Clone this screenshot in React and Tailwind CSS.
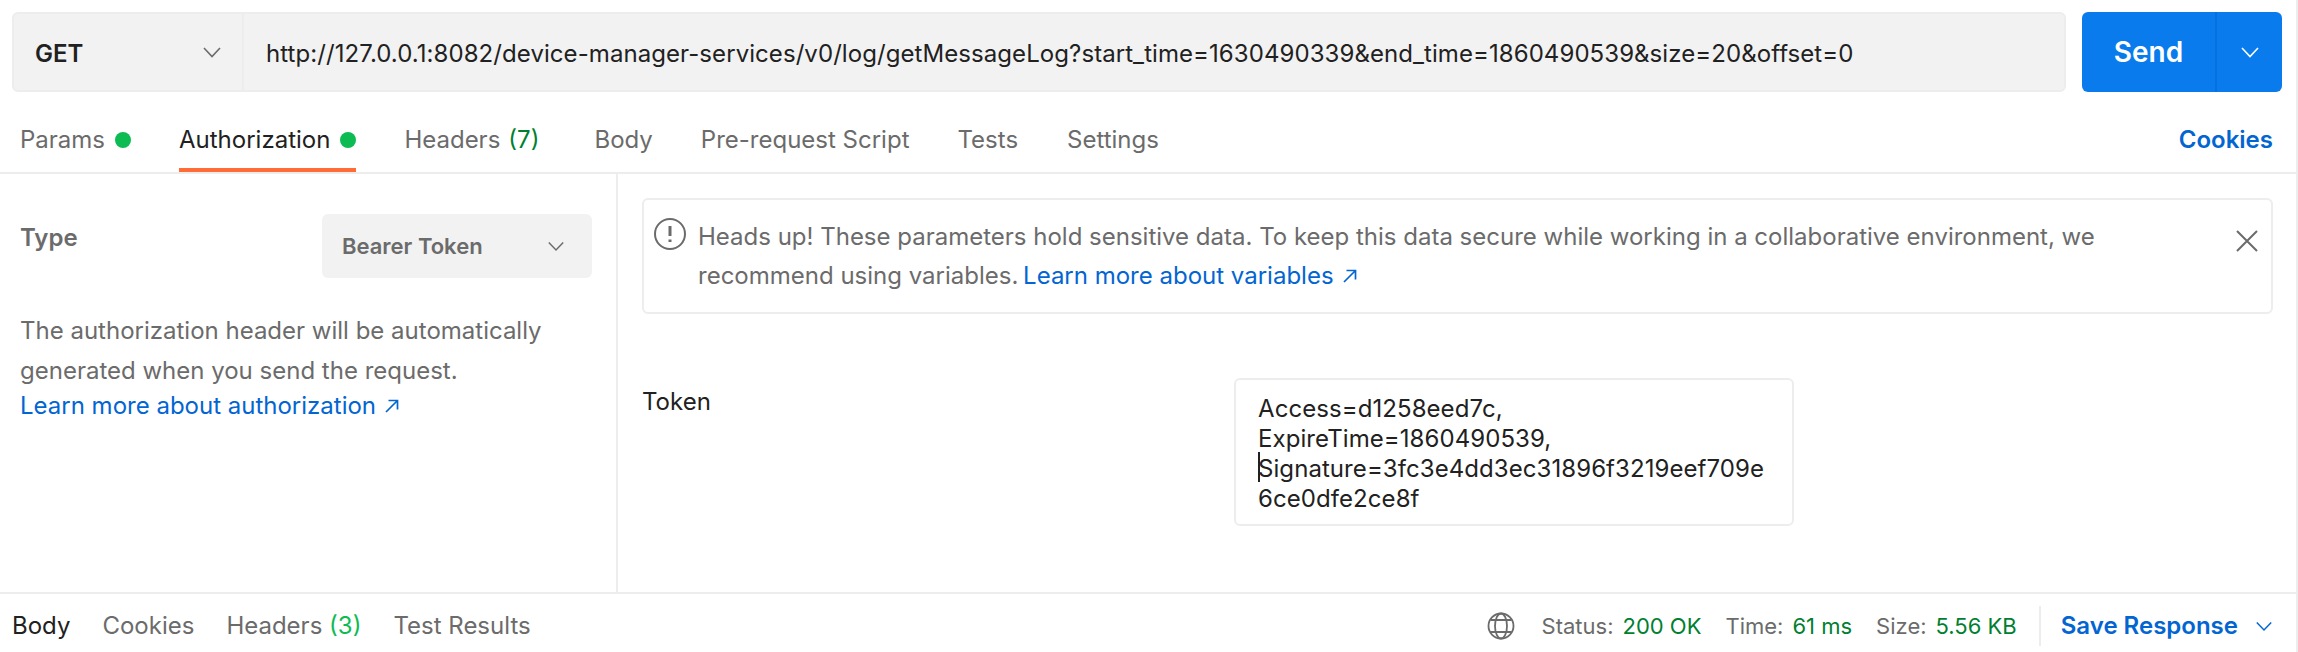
import React from 'react'

function Chevron({ className }) {
  return (
    <svg viewBox="0 0 20 20" fill="none" stroke="currentColor" strokeWidth="1.6" className={className}>
      <path d="M2 6l8 8.5L18 6" />
    </svg>
  )
}

function ArrowNE({ className }) {
  return (
    <svg viewBox="0 0 16 16" fill="none" stroke="currentColor" strokeWidth="1.7" className={className}>
      <path d="M2 14L13 3M4.5 2.5h9v9" />
    </svg>
  )
}

function Dot() {
  return <span className="h-4 w-4 rounded-full bg-[#0cbb52]" />
}

function Tab({ active, children, dot, extra, className = '' }) {
  return (
    <div className={`relative flex h-full items-center gap-[10px] ${active ? 'text-[#212121]' : 'text-[#6b6b6b]'} ${className}`}>
      <span>
        {children}
        {extra && <span className="ml-[8px] text-[#007f31]">{extra}</span>}
      </span>
      {dot && <Dot />}
      {active && <span className="absolute inset-x-0 bottom-0 h-1 bg-[#ff6c37]" />}
    </div>
  )
}

function Stat({ label, value, className = '' }) {
  return (
    <span className={`flex gap-[9px] ${className}`}>
      <span className="text-[#6b6b6b]">{label}</span>
      <span className="text-[#007f31]">{value}</span>
    </span>
  )
}

export default function App() {
  return (
    <div className="flex h-[652px] w-[2298px] flex-col border-r-2 border-[#ededed] bg-white font-['Inter',sans-serif] text-[24px] leading-[30px] text-[#212121]">
      {/* url bar */}
      <div className="flex h-[92px] shrink-0 gap-4 pl-3 pr-[14px] pt-3">
        <div className="flex h-20 flex-1 rounded-md border-2 border-[#ededed] bg-[#f2f2f2]">
          <div className="flex w-[230px] items-center justify-between border-r-2 border-[#ededed] pl-[21px] pr-5">
            <span className="pt-[3px] font-semibold">GET</span>
            <Chevron className="h-5 w-5 text-[#6b6b6b]" />
          </div>
          <div className="flex items-center pl-[22px] pt-[3px] tracking-[0.07px] whitespace-nowrap">
            http://127.0.0.1:8082/device-manager-services/v0/log/getMessageLog?start_time=1630490339&amp;end_time=1860490539&amp;size=20&amp;offset=0
          </div>
        </div>
        <div className="flex h-20 w-[200px] rounded-md bg-[#097bed] text-white">
          <div className="flex w-[135px] items-center justify-center border-r-2 border-[#0670dd] text-[28px] font-semibold">Send</div>
          <div className="flex flex-1 items-center justify-center">
            <Chevron className="h-5 w-5" />
          </div>
        </div>
      </div>

      {/* request tabs */}
      <div className="flex h-[82px] shrink-0 items-center gap-12 border-b-2 border-[#ededed] pl-5 pr-[23px] pt-4">
        <Tab dot>Params</Tab>
        <Tab active dot>Authorization</Tab>
        <Tab extra="(7)" className="mr-[7px]">Headers</Tab>
        <Tab>Body</Tab>
        <Tab>Pre-request Script</Tab>
        <Tab>Tests</Tab>
        <Tab className="ml-[1px]">Settings</Tab>
        <span className="ml-auto font-semibold text-[#0265d2]">Cookies</span>
      </div>

      {/* auth panel */}
      <div className="flex min-h-0 flex-1">
        <div className="w-[618px] shrink-0 border-r-2 border-[#ededed] pl-5 pr-6 pt-10">
          <div className="flex items-start justify-between">
            <span className="mt-[9px] font-semibold text-[#6b6b6b]">Type</span>
            <div className="flex h-16 w-[270px] items-center justify-between rounded-md bg-[#f2f2f2] pl-5 pr-[27px] text-[22px] font-semibold text-[#6b6b6b]">
              Bearer Token
              <Chevron className="h-[18px] w-[18px]" />
            </div>
          </div>
          <p className="mt-[33px] leading-[40px] text-[#6b6b6b]">
            The authorization header will be automatically<br />
            generated when you send the request.
          </p>
          <a className="flex items-center gap-2 text-[#0265d2]">
            Learn more about authorization
            <ArrowNE className="h-4 w-4" />
          </a>
        </div>
        <div className="flex-1 pl-6 pr-[23px] pt-6">
          <div className="flex h-[116px] rounded-md border-2 border-[#ededed] pl-[10px] pr-[13px] pt-[17px]">
            <svg viewBox="0 0 32 32" fill="none" stroke="#6b6b6b" strokeWidth="2" className="mt-[1px] h-8 w-8 shrink-0">
              <circle cx="16" cy="16" r="15" />
              <path d="M16 8v10M16 21.5v2.5" strokeWidth="3" />
            </svg>
            <div className="ml-[12px] flex-1 leading-[39px] text-[#6b6b6b]">
              Heads up! These parameters hold sensitive data. To keep this data secure while working in a collaborative environment, we<br />
              recommend using variables.{' '}
              <a className="-ml-[2px] inline-flex items-center gap-2 text-[#0265d2]">
                Learn more about variables
                <ArrowNE className="h-4 w-4" />
              </a>
            </div>
            <svg viewBox="0 0 22 22" fill="none" stroke="#6b6b6b" strokeWidth="2" className="mt-[13px] h-[22px] w-[22px] shrink-0">
              <path d="M1 1l20 20M21 1L1 21" />
            </svg>
          </div>
          <div className="mt-[64px] flex">
            <span className="mt-[9px] w-[592px] shrink-0">Token</span>
            <div className="relative h-[148px] w-[560px] rounded-md border-2 border-[#ededed] pl-[22px] pt-[14px] leading-[30px] tracking-[0.07px]">
              <div>Access=d1258eed7c,</div>
              <div>ExpireTime=1860490539,</div>
              <div>Signature=3fc3e4dd3ec31896f3219eef709e</div>
              <div>6ce0dfe2ce8f</div>
              <span className="absolute left-[22px] top-[72px] h-[30px] w-[2px] bg-[#212121]" />
            </div>
          </div>
        </div>
      </div>

      {/* response bar */}
      <div className="flex h-[60px] shrink-0 items-center border-t-2 border-[#ededed] pl-3 pr-[23px] pt-[5px]">
        <div className="flex items-center gap-8">
          <span>Body</span>
          <span className="text-[#6b6b6b]">Cookies</span>
          <span className="text-[#6b6b6b]">
            Headers <span className="text-[#0cbb52]">(3)</span>
          </span>
          <span className="text-[#6b6b6b]">Test Results</span>
        </div>
        <div className="ml-auto flex items-center text-[22px]">
          <svg viewBox="0 0 28 28" fill="none" stroke="#6b6b6b" strokeWidth="1.8" className="mr-[27px] h-7 w-7">
            <circle cx="14" cy="14" r="12.5" />
            <ellipse cx="14" cy="14" rx="6" ry="12.5" />
            <path d="M3.5 8h21M3.5 20h21" />
          </svg>
          <Stat label="Status:" value="200 OK" className="mr-6" />
          <Stat label="Time:" value="61 ms" className="mr-6" />
          <Stat label="Size:" value="5.56 KB" />
          <span className="ml-[22px] mr-5 h-10 w-[2px] bg-[#ededed]" />
          <span className="text-[24px] font-semibold text-[#0265d2]">Save Response</span>
          <Chevron className="ml-[17px] h-[18px] w-[18px] text-[#0265d2]" />
        </div>
      </div>
    </div>
  )
}
